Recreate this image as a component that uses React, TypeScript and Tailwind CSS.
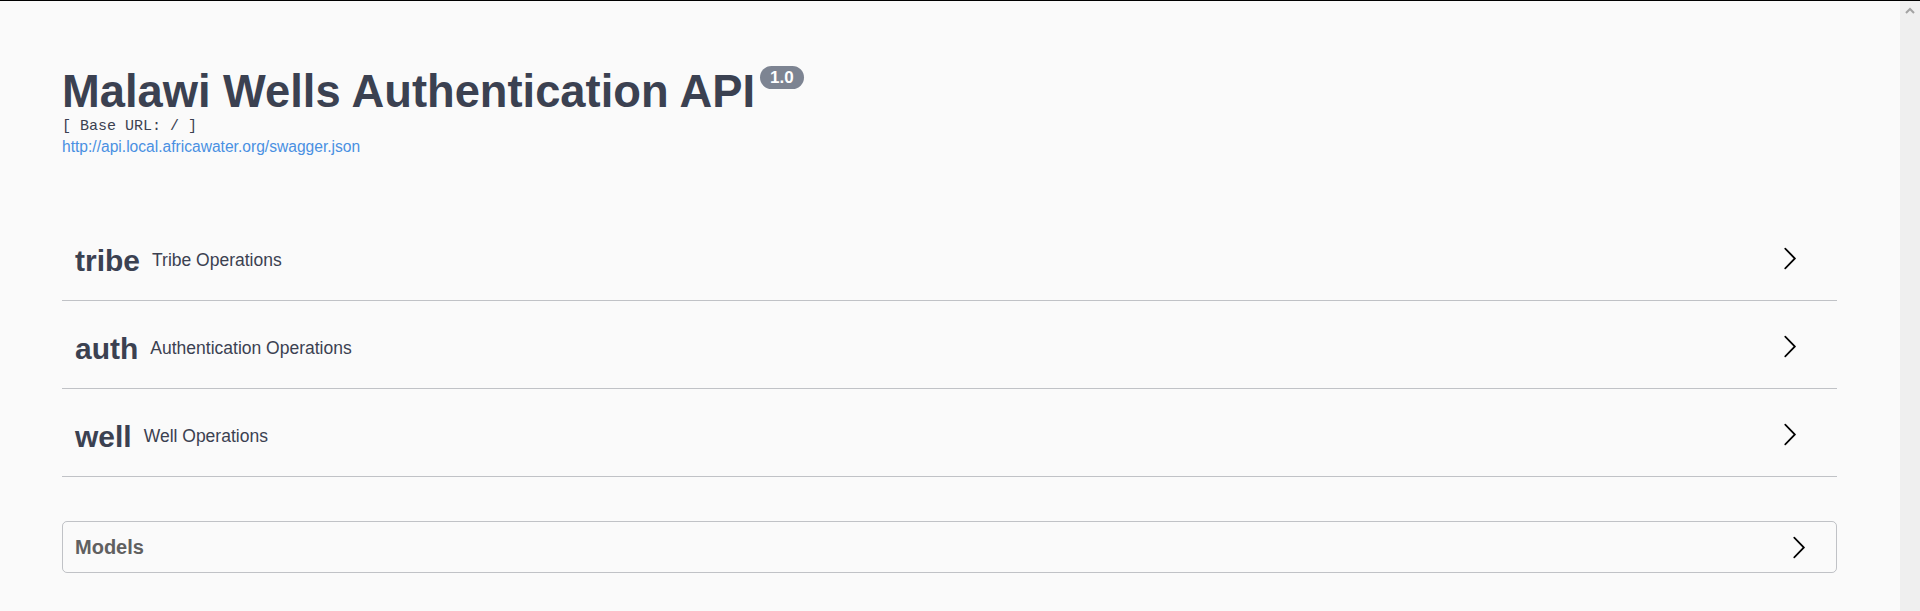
import React from "react";

const tags = [
  { name: "tribe", description: "Tribe Operations" },
  { name: "auth", description: "Authentication Operations" },
  { name: "well", description: "Well Operations" },
];

function Arrow() {
  return (
    <svg width="25" height="25" viewBox="0 0 20 20" fill="#000">
      <path d="M13.25 10L6.109 2.58a.697.697 0 0 1 0-.979.68.68 0 0 1 .969 0l7.83 7.908a.697.697 0 0 1 0 .979l-7.83 7.908c-.268.271-.701.271-.969 0a.697.697 0 0 1 0-.979L13.25 10z" />
    </svg>
  );
}

export default function App() {
  return (
    <div className="flex h-[611px] flex-col overflow-hidden bg-[#fafafa] font-['Liberation_Sans',Arial,sans-serif] text-[#3b4151]">
      <div className="h-px bg-black" />
      <div className="flex flex-1">
        <main className="flex-1 pl-[62px] pr-[63px] pt-[65px]">
          {/* Info */}
          <div className="flex items-start">
            <h2 className="text-[45.3px] font-bold leading-[52px]">Malawi Wells Authentication API</h2>
            <span className="ml-[5px] flex h-[23px] items-center rounded-full bg-[#7d8492] px-[10px] text-[17px] font-bold leading-none text-white">
              1.0
            </span>
          </div>
          <pre className="font-['Liberation_Mono','Courier_New',monospace] text-[15px] leading-[17px]">[ Base URL: / ]</pre>
          <a href="#" className="mt-[3px] block text-[15.6px] leading-[18px] text-[#4990e2]">
            http://api.local.africawater.org/swagger.json
          </a>

          {/* Tags */}
          <div className="mt-[57px]">
            {tags.map((tag) => (
              <div
                key={tag.name}
                className="flex h-[88px] items-center border-b border-[rgba(59,65,81,0.3)] pl-[13px] pr-[35px]"
              >
                <div className="flex flex-1 items-center pt-[7px]">
                  <span className="text-[30px] font-bold">{tag.name}</span>
                  <span className="pl-[12px] text-[17.5px]">{tag.description}</span>
                </div>
                <div className="pt-[3px]">
                  <Arrow />
                </div>
              </div>
            ))}
          </div>

          {/* Models */}
          <div className="mt-[44px] flex h-[52px] items-center rounded-[5px] border border-[rgba(59,65,81,0.3)] pl-[12px] pr-[25px]">
            <h4 className="flex-1 text-[20px] font-bold text-[#606060]">Models</h4>
            <div className="pt-[1px]">
              <Arrow />
            </div>
          </div>
        </main>

        {/* scrollbar */}
        <div className="flex w-[20px] justify-center bg-[#efefef] pt-[6px]">
          <svg width="10" height="7" viewBox="0 0 10 7">
            <path d="M1 6 L5 2 L9 6" fill="none" stroke="#a3a3a3" strokeWidth="2" />
          </svg>
        </div>
      </div>
    </div>
  );
}
